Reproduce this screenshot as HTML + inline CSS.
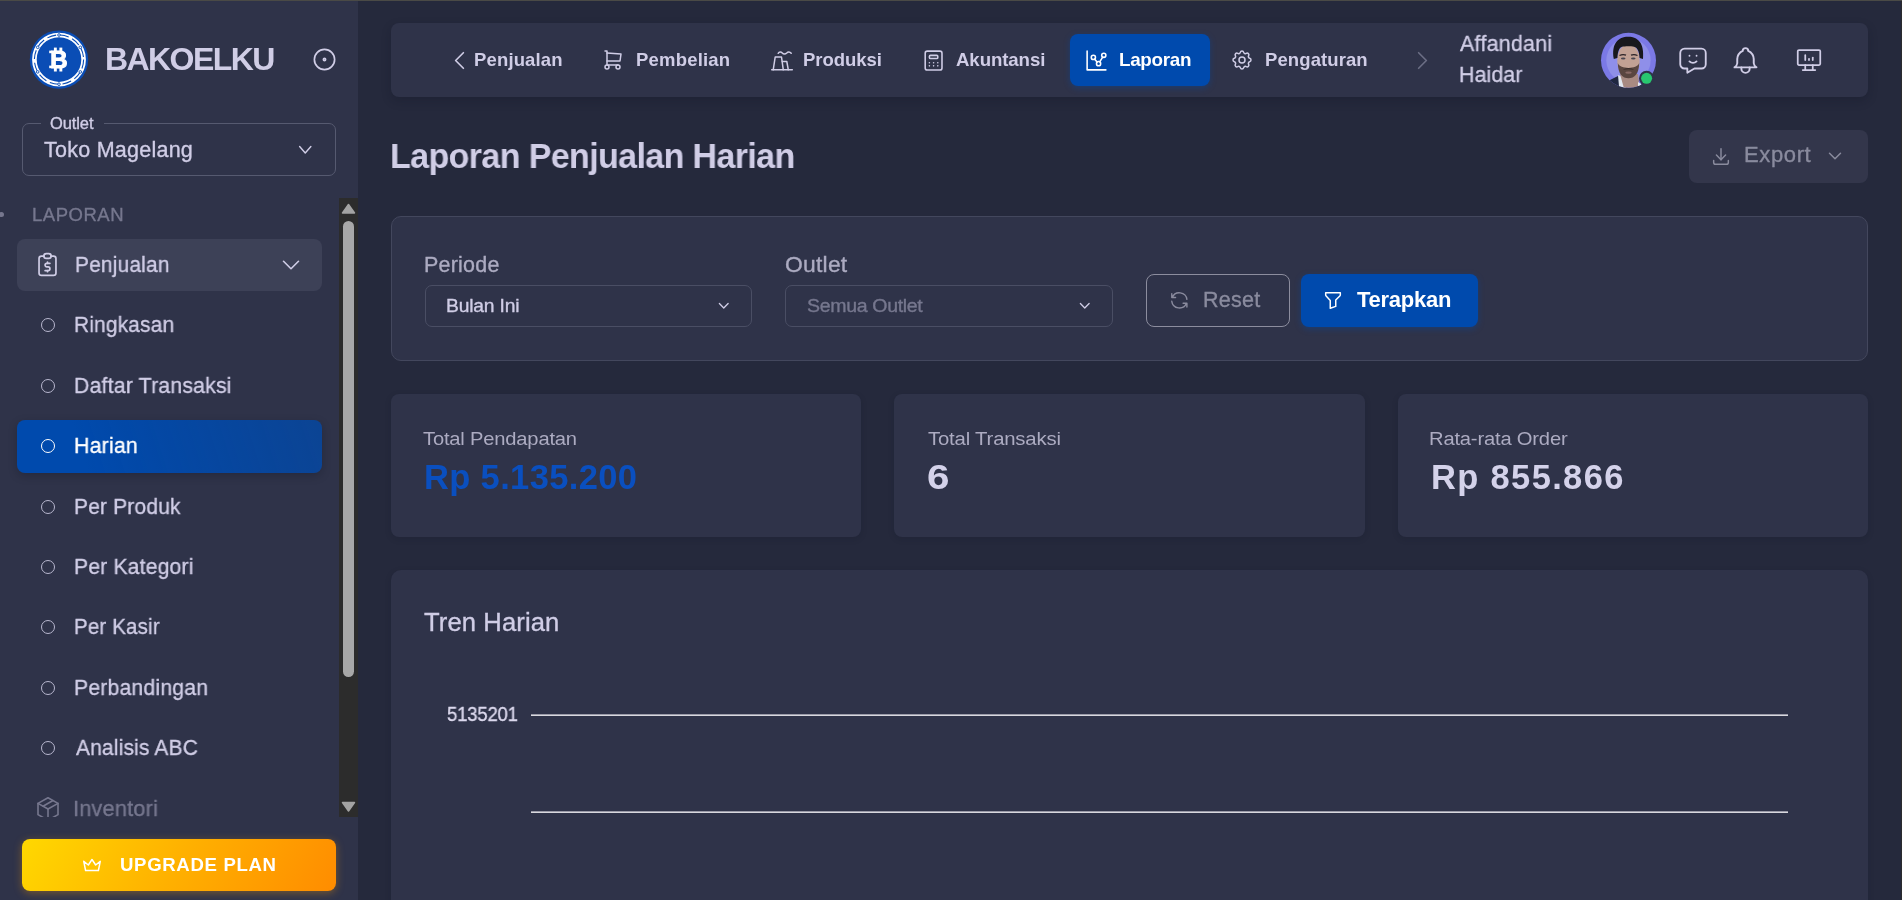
<!DOCTYPE html>
<html><head><meta charset="utf-8"><title>Laporan Penjualan Harian</title>
<style>
html,body{margin:0;padding:0;}
body{width:1902px;height:900px;overflow:hidden;position:relative;background:#25293c;
font-family:"Liberation Sans",sans-serif;-webkit-font-smoothing:antialiased;}
</style></head><body>
<div style="position:absolute;left:0px;top:0px;width:358px;height:900px;background:#2f3349;"></div>
<svg style="position:absolute;left:0;top:0;will-change:transform" width="120" height="120" viewBox="0 0 120 120">
<circle cx="59" cy="59.6" r="29.2" fill="#0a4db5"/>
<circle cx="59" cy="59.6" r="24.6" fill="none" stroke="#fff" stroke-width="4.6"/>
<circle cx="59" cy="59.6" r="24.6" fill="none" stroke="#0a4db5" stroke-width="1.1" stroke-dasharray="9 3.9"/>
<g fill="#fff" stroke="#0a4db5" stroke-width="0.9">
<circle cx="59" cy="35" r="1.3"/><circle cx="59" cy="84.2" r="1.3"/>
<circle cx="37.7" cy="47.3" r="1.3"/><circle cx="80.3" cy="47.3" r="1.3"/>
<circle cx="37.7" cy="71.9" r="1.3"/><circle cx="80.3" cy="71.9" r="1.3"/>
</g>
<text x="50.2" y="68" font-family="Liberation Sans" font-weight="bold" font-size="24" fill="#fff" stroke="#fff" stroke-width="1">B</text>
<rect x="53.9" y="47.6" width="2.9" height="4.5" fill="#fff"/><rect x="59.4" y="47.6" width="2.9" height="4.5" fill="#fff"/>
<rect x="53.9" y="67.2" width="2.9" height="4.3" fill="#fff"/><rect x="59.4" y="67.2" width="2.9" height="4.3" fill="#fff"/>
<rect x="49.2" y="50.6" width="3" height="2.6" fill="#fff"/><rect x="49.2" y="65.6" width="3" height="2.6" fill="#fff"/>
</svg>
<div style="position:absolute;left:105.36px;top:42.81px;font-size:32.00px;line-height:32.00px;font-weight:bold;color:#d0cde6;letter-spacing:-1.57px;white-space:nowrap;will-change:transform;">BAKOELKU</div>
<svg style="position:absolute;left:310.75px;top:46.1px;" width="27" height="27" viewBox="0 0 24 24" fill="none" stroke="#d0cde6" stroke-width="1.5" stroke-linecap="round" stroke-linejoin="round"><path d="M12 12m-9 0a9 9 0 1 0 18 0a9 9 0 1 0 -18 0"/><path d="M12 12m-1 0a1 1 0 1 0 2 0a1 1 0 1 0 -2 0"/></svg>
<div style="position:absolute;left:22px;top:123px;width:314px;height:53px;box-sizing:border-box;border:1px solid #565a70;border-radius:7px;"></div>
<div style="position:absolute;left:41px;top:120px;width:63px;height:7px;background:#2f3349;"></div>
<div style="position:absolute;left:50.00px;top:115.03px;font-size:16.50px;line-height:16.50px;font-weight:normal;color:#d0cde6;letter-spacing:-0.1px;white-space:nowrap;will-change:transform;-webkit-text-stroke:0.35px #d0cde6;">Outlet</div>
<div style="position:absolute;left:43.68px;top:139.90px;font-size:21.50px;line-height:21.50px;font-weight:normal;color:#d0cde6;letter-spacing:0.25px;white-space:nowrap;will-change:transform;-webkit-text-stroke:0.35px #d0cde6;">Toko Magelang</div>
<svg style="position:absolute;left:293.85px;top:138.3px;" width="22.5" height="22.5" viewBox="0 0 24 24" fill="none" stroke="#d0cde6" stroke-width="1.5" stroke-linecap="round" stroke-linejoin="round"><path d="M6 9l6 7l6 -7"/></svg>
<div style="position:absolute;left:-1px;top:212px;width:5px;height:5px;border-radius:50%;background:#76778e"></div>
<div style="position:absolute;left:32.00px;top:205.84px;font-size:18.50px;line-height:18.50px;font-weight:normal;color:#76778e;letter-spacing:0.53px;white-space:nowrap;will-change:transform;-webkit-text-stroke:0.35px #76778e;">LAPORAN</div>
<div style="position:absolute;left:0;top:198px;width:339px;height:619px;overflow:hidden">
<div style="position:absolute;left:17px;top:41px;width:305px;height:52px;background:#3d4157;border-radius:8px;"></div>
<svg style="position:absolute;left:33.35px;top:52.25px;" width="29" height="29" viewBox="0 0 24 24" fill="none" stroke="#d0cde6" stroke-width="1.4" stroke-linecap="round" stroke-linejoin="round"><path d="M9 5h-2a2 2 0 0 0 -2 2v12a2 2 0 0 0 2 2h10a2 2 0 0 0 2 -2v-12a2 2 0 0 0 -2 -2h-2"/><path d="M9 3m0 2a2 2 0 0 1 2 -2h2a2 2 0 0 1 2 2v0a2 2 0 0 1 -2 2h-2a2 2 0 0 1 -2 -2z"/><path d="M14 11h-2.5a1.5 1.5 0 0 0 0 3h1a1.5 1.5 0 0 1 0 3h-2.5"/><path d="M12 17v1m0 -8v1"/></svg>
<div style="position:absolute;left:74.58px;top:56.20px;font-size:22.44px;line-height:22.44px;font-weight:normal;color:#d0cde6;letter-spacing:0.2px;white-space:nowrap;will-change:transform;transform:scaleX(0.9309);transform-origin:0 0;-webkit-text-stroke:0.35px #d0cde6;">Penjualan</div>
<svg style="position:absolute;left:276.2px;top:51.849999999999994px;" width="30" height="30" viewBox="0 0 24 24" fill="none" stroke="#d0cde6" stroke-width="1.3" stroke-linecap="round" stroke-linejoin="round"><path d="M6 9l6 6l6 -6"/></svg>
<div style="position:absolute;left:41px;top:120.4px;width:14px;height:14px;box-sizing:border-box;border:1.5px solid #b9b8cf;border-radius:50%"></div>
<div style="position:absolute;left:74.26px;top:116.44px;font-size:22.44px;line-height:22.44px;font-weight:normal;color:#d0cde6;letter-spacing:0.2px;white-space:nowrap;will-change:transform;transform:scaleX(0.9298);transform-origin:0 0;-webkit-text-stroke:0.35px #d0cde6;">Ringkasan</div>
<div style="position:absolute;left:41px;top:180.8px;width:14px;height:14px;box-sizing:border-box;border:1.5px solid #b9b8cf;border-radius:50%"></div>
<div style="position:absolute;left:74.26px;top:176.68px;font-size:22.44px;line-height:22.44px;font-weight:normal;color:#d0cde6;letter-spacing:0.2px;white-space:nowrap;will-change:transform;transform:scaleX(0.9468);transform-origin:0 0;-webkit-text-stroke:0.35px #d0cde6;">Daftar Transaksi</div>
<div style="position:absolute;left:17px;top:222.2px;width:305px;height:53.0px;background:linear-gradient(72.47deg,#004aad 22%,rgba(0,74,173,0.75) 100%);border-radius:8px;box-shadow:0 3px 8px rgba(10,14,28,0.25);"></div>
<div style="position:absolute;left:41px;top:241.2px;width:14px;height:14px;box-sizing:border-box;border:1.5px solid #ffffff;border-radius:50%"></div>
<div style="position:absolute;left:74.26px;top:236.92px;font-size:22.44px;line-height:22.44px;font-weight:normal;color:#ffffff;letter-spacing:0.2px;white-space:nowrap;will-change:transform;transform:scaleX(0.9502);transform-origin:0 0;-webkit-text-stroke:0.35px #ffffff;">Harian</div>
<div style="position:absolute;left:41px;top:301.6px;width:14px;height:14px;box-sizing:border-box;border:1.5px solid #b9b8cf;border-radius:50%"></div>
<div style="position:absolute;left:74.26px;top:297.96px;font-size:22.44px;line-height:22.44px;font-weight:normal;color:#d0cde6;letter-spacing:0.2px;white-space:nowrap;will-change:transform;transform:scaleX(0.9336);transform-origin:0 0;-webkit-text-stroke:0.35px #d0cde6;">Per Produk</div>
<div style="position:absolute;left:41px;top:362.0px;width:14px;height:14px;box-sizing:border-box;border:1.5px solid #b9b8cf;border-radius:50%"></div>
<div style="position:absolute;left:74.26px;top:358.20px;font-size:22.44px;line-height:22.44px;font-weight:normal;color:#d0cde6;letter-spacing:0.2px;white-space:nowrap;will-change:transform;transform:scaleX(0.9406);transform-origin:0 0;-webkit-text-stroke:0.35px #d0cde6;">Per Kategori</div>
<div style="position:absolute;left:41px;top:422.4px;width:14px;height:14px;box-sizing:border-box;border:1.5px solid #b9b8cf;border-radius:50%"></div>
<div style="position:absolute;left:74.26px;top:418.44px;font-size:22.44px;line-height:22.44px;font-weight:normal;color:#d0cde6;letter-spacing:0.2px;white-space:nowrap;will-change:transform;transform:scaleX(0.9116);transform-origin:0 0;-webkit-text-stroke:0.35px #d0cde6;">Per Kasir</div>
<div style="position:absolute;left:41px;top:482.8px;width:14px;height:14px;box-sizing:border-box;border:1.5px solid #b9b8cf;border-radius:50%"></div>
<div style="position:absolute;left:74.26px;top:478.68px;font-size:22.44px;line-height:22.44px;font-weight:normal;color:#d0cde6;letter-spacing:0.2px;white-space:nowrap;will-change:transform;transform:scaleX(0.9443);transform-origin:0 0;-webkit-text-stroke:0.35px #d0cde6;">Perbandingan</div>
<div style="position:absolute;left:41px;top:543.2px;width:14px;height:14px;box-sizing:border-box;border:1.5px solid #b9b8cf;border-radius:50%"></div>
<div style="position:absolute;left:75.86px;top:538.92px;font-size:22.44px;line-height:22.44px;font-weight:normal;color:#d0cde6;letter-spacing:0.2px;white-space:nowrap;will-change:transform;transform:scaleX(0.9326);transform-origin:0 0;-webkit-text-stroke:0.35px #d0cde6;">Analisis ABC</div>
<svg style="position:absolute;left:33px;top:596px;" width="30" height="30" viewBox="0 0 24 24" fill="none" stroke="#76778e" stroke-width="1.3" stroke-linecap="round" stroke-linejoin="round"><path d="M12 3l8 4.5l0 9l-8 4.5l-8 -4.5l0 -9l8 -4.5"/><path d="M12 12l8 -4.5"/><path d="M12 12l0 9"/><path d="M12 12l-8 -4.5"/><path d="M16 5.25l-8 4.5"/></svg>
<div style="position:absolute;left:73.46px;top:599.96px;font-size:22.44px;line-height:22.44px;font-weight:normal;color:#76778e;letter-spacing:0.2px;white-space:nowrap;will-change:transform;transform:scaleX(0.9678);transform-origin:0 0;-webkit-text-stroke:0.35px #76778e;">Inventori</div>
</div>
<div style="position:absolute;left:339px;top:198px;width:19px;height:619px;background:#2c2c2c;"></div>
<svg style="position:absolute;left:339px;top:198px" width="19" height="619"><path d="M9.5 6.5 L15.5 15 L3.5 15 Z" fill="#a3a3a3" stroke="#a3a3a3" stroke-width="1.5" stroke-linejoin="round"/><path d="M9.5 613 L15.5 604.5 L3.5 604.5 Z" fill="#a3a3a3" stroke="#a3a3a3" stroke-width="1.5" stroke-linejoin="round"/></svg>
<div style="position:absolute;left:343px;top:221px;width:11px;height:456px;background:#a8a8a8;border-radius:6px;"></div>
<div style="position:absolute;left:22px;top:839px;width:314px;height:52px;background:linear-gradient(120deg,#ffd800 0%,#ffb000 50%,#ff8c00 100%);border-radius:8px;box-shadow:0 2px 8px rgba(255,159,0,0.35);"></div>
<svg style="position:absolute;left:81px;top:853.6px;" width="22" height="22" viewBox="0 0 24 24" fill="none" stroke="#ffffff" stroke-width="1.6" stroke-linecap="round" stroke-linejoin="round"><path d="M12 6l4 6l5 -4l-2 10h-14l-2 -10l5 4z"/></svg>
<div style="position:absolute;left:119.78px;top:856.12px;font-size:18.50px;line-height:18.50px;font-weight:bold;color:#ffffff;letter-spacing:0.66px;white-space:nowrap;will-change:transform;transform:scaleX(1.0047);transform-origin:0 0;">UPGRADE PLAN</div>
<div style="position:absolute;left:391px;top:23px;width:1477px;height:74px;background:#2f3349;border-radius:8px;box-shadow:0 4px 10px rgba(15,20,34,0.25);"></div>
<svg style="position:absolute;left:443.8px;top:45px;" width="31" height="31" viewBox="0 0 24 24" fill="none" stroke="#d0cde6" stroke-width="1.3" stroke-linecap="round" stroke-linejoin="round"><path d="M15 6l-6 6l6 6"/></svg>
<div style="position:absolute;left:473.64px;top:50.64px;font-size:18.50px;line-height:18.50px;font-weight:bold;color:#d0cde6;letter-spacing:0.15px;white-space:nowrap;will-change:transform;">Penjualan</div>
<svg style="position:absolute;left:601px;top:48px;" width="24" height="24" viewBox="0 0 24 24" fill="none" stroke="#d0cde6" stroke-width="1.5" stroke-linecap="round" stroke-linejoin="round"><path d="M6 19m-2 0a2 2 0 1 0 4 0a2 2 0 1 0 -4 0"/><path d="M17 19m-2 0a2 2 0 1 0 4 0a2 2 0 1 0 -4 0"/><path d="M17 17h-11v-14h-2"/><path d="M6 5l14 1l-1 7h-13"/></svg>
<div style="position:absolute;left:635.64px;top:50.64px;font-size:18.50px;line-height:18.50px;font-weight:bold;color:#d0cde6;letter-spacing:0.2px;white-space:nowrap;will-change:transform;">Pembelian</div>
<svg style="position:absolute;left:766px;top:46px;" width="32" height="30" viewBox="0 0 32 30" fill="none" stroke="#d0cde6" stroke-width="1.5" stroke-linecap="round" stroke-linejoin="round"><path d="M5.7 23.8H26.3"/><path d="M7.2 23.8L9.2 11H15.5L17.3 23.8"/><path d="M16.3 15.5H20.8L22.3 23.8"/><path d="M12.2 7.3C13.2 5.6 15 5.6 16.3 7C17.5 8.3 19.4 8.3 20.7 7C22 5.6 23.8 5.6 25.2 7.3"/></svg>
<div style="position:absolute;left:803.08px;top:50.64px;font-size:18.50px;line-height:18.50px;font-weight:bold;color:#d0cde6;letter-spacing:-0.05px;white-space:nowrap;will-change:transform;">Produksi</div>
<svg style="position:absolute;left:921px;top:48px;" width="25.2" height="25.2" viewBox="0 0 24 24" fill="none" stroke="#d0cde6" stroke-width="1.5" stroke-linecap="round" stroke-linejoin="round"><path d="M4 3m0 2a2 2 0 0 1 2 -2h12a2 2 0 0 1 2 2v14a2 2 0 0 1 -2 2h-12a2 2 0 0 1 -2 -2z"/><path d="M8 7m0 1a1 1 0 0 1 1 -1h6a1 1 0 0 1 1 1v1a1 1 0 0 1 -1 1h-6a1 1 0 0 1 -1 -1z"/><path d="M8 14l0 .01"/><path d="M12 14l0 .01"/><path d="M16 14l0 .01"/><path d="M8 17l0 .01"/><path d="M12 17l0 .01"/><path d="M16 17l0 .01"/></svg>
<div style="position:absolute;left:955.56px;top:50.64px;font-size:18.50px;line-height:18.50px;font-weight:bold;color:#d0cde6;letter-spacing:-0.1px;white-space:nowrap;will-change:transform;transform:scaleX(1.0083);transform-origin:0 0;">Akuntansi</div>
<div style="position:absolute;left:1070px;top:34px;width:140px;height:52px;background:#004aad;border-radius:8px;box-shadow:0 2px 6px rgba(0,74,173,0.4);"></div>
<svg style="position:absolute;left:1083.65px;top:47.9px;" width="25" height="25" viewBox="0 0 24 24" fill="none" stroke="#ffffff" stroke-width="1.5" stroke-linecap="round" stroke-linejoin="round"><path d="M3 3v18h18"/><path d="M9 9m-2 0a2 2 0 1 0 4 0a2 2 0 1 0 -4 0"/><path d="M19 7m-2 0a2 2 0 1 0 4 0a2 2 0 1 0 -4 0"/><path d="M14 15m-2 0a2 2 0 1 0 4 0a2 2 0 1 0 -4 0"/><path d="M10.16 10.62l2.34 2.88"/><path d="M15.088 13.328l2.837 -4.586"/></svg>
<div style="position:absolute;left:1118.72px;top:50.64px;font-size:18.50px;line-height:18.50px;font-weight:bold;color:#ffffff;letter-spacing:-0.3px;white-space:nowrap;will-change:transform;transform:scaleX(1.0170);transform-origin:0 0;">Laporan</div>
<svg style="position:absolute;left:1229.9px;top:47.8px;" width="24" height="24" viewBox="0 0 24 24" fill="none" stroke="#d0cde6" stroke-width="1.5" stroke-linecap="round" stroke-linejoin="round"><path d="M10.325 4.317c.426 -1.756 2.924 -1.756 3.35 0a1.724 1.724 0 0 0 2.573 1.066c1.543 -.94 3.31 .826 2.37 2.37a1.724 1.724 0 0 0 1.065 2.572c1.756 .426 1.756 2.924 0 3.35a1.724 1.724 0 0 0 -1.066 2.573c.94 1.543 -.826 3.31 -2.37 2.37a1.724 1.724 0 0 0 -2.572 1.065c-.426 1.756 -2.924 1.756 -3.35 0a1.724 1.724 0 0 0 -2.573 -1.066c-1.543 .94 -3.31 -.826 -2.37 -2.37a1.724 1.724 0 0 0 -1.065 -2.572c-1.756 -.426 -1.756 -2.924 0 -3.35a1.724 1.724 0 0 0 1.066 -2.573c-.94 -1.543 .826 -3.31 2.37 -2.37c1 .608 2.296 .07 2.572 -1.065z"/><path d="M9 12a3 3 0 1 0 6 0a3 3 0 0 0 -6 0"/></svg>
<div style="position:absolute;left:1264.54px;top:50.64px;font-size:18.50px;line-height:18.50px;font-weight:bold;color:#d0cde6;letter-spacing:0.1px;white-space:nowrap;will-change:transform;">Pengaturan</div>
<svg style="position:absolute;left:1407.05px;top:45px;" width="31" height="31" viewBox="0 0 24 24" fill="none" stroke="#6b6e84" stroke-width="1.3" stroke-linecap="round" stroke-linejoin="round"><path d="M9 6l6 6l-6 6"/></svg>
<div style="position:absolute;left:1460.00px;top:32.81px;font-size:22.20px;line-height:22.20px;font-weight:normal;color:#d0cde6;letter-spacing:0.3px;white-space:nowrap;will-change:transform;transform:scaleX(0.9617);transform-origin:0 0;-webkit-text-stroke:0.35px #d0cde6;">Affandani</div>
<div style="position:absolute;left:1459.20px;top:64.00px;font-size:22.56px;line-height:22.56px;font-weight:normal;color:#d0cde6;letter-spacing:0.1px;white-space:nowrap;will-change:transform;transform:scaleX(0.9466);transform-origin:0 0;-webkit-text-stroke:0.35px #d0cde6;">Haidar</div>
<svg style="position:absolute;left:1598px;top:30px" width="62" height="62" viewBox="0 0 62 62">
<defs><clipPath id="avc"><circle cx="30.5" cy="30.3" r="27.5"/></clipPath></defs>
<circle cx="30.5" cy="30.3" r="27.5" fill="#7b79e6"/>
<g clip-path="url(#avc)">
<circle cx="30.5" cy="30.3" r="22.2" fill="#8f8fe9"/>
<path d="M8 62 L12 50 L21 45.5 L24 62 Z" fill="#1f2740"/>
<path d="M20 45 L27 48 L28 62 L21.5 62 Z" fill="#e2e8f0"/>
<path d="M22 44 L40 44 L42 62 L27 62 Z" fill="#a88a82"/>
<path d="M40 52 L43 54 L43 60 L40 58 Z" fill="#e2e8f0"/>
<ellipse cx="30.5" cy="30.5" rx="11.2" ry="16.5" fill="#c2a194"/>
<path d="M19.8 33 C20 44 24.5 48.3 30.5 48.3 C36.5 48.3 41 44 41.2 33 C39 39.5 22 39.5 19.8 33 Z" fill="#5a4640"/>
<path d="M24.5 40 Q30.5 36 36.5 40 Q30.5 38.6 24.5 40 Z" fill="#3a2d2a"/>
<ellipse cx="30.5" cy="42.6" rx="3.2" ry="1.2" fill="#8a6a66"/>
<path d="M15.8 29 C13 13 21 6.5 30.5 6.8 C40 7 46.5 13 45 29 L41.6 28 C41.2 21 39.2 17.5 36 16.8 C33 16 27 16 24 16.8 C21.5 17.6 19.8 21 19.4 28 Z" fill="#18181d"/>
<ellipse cx="25.2" cy="28.5" rx="2.3" ry="1.1" fill="#4a4650"/>
<ellipse cx="35.3" cy="28.5" rx="2.3" ry="1.1" fill="#4a4650"/>
<path d="M21.5 25.5 Q25 23.8 28 25.2 M33 25.2 Q36 23.8 39.5 25.5" stroke="#2a2226" stroke-width="1.3" fill="none"/>
</g>
<circle cx="48.6" cy="48.3" r="7.6" fill="#2f3349"/>
<circle cx="48.6" cy="48.3" r="5.5" fill="#28c76f"/>
</svg>
<svg style="position:absolute;left:1676px;top:43.4px;" width="34" height="34" viewBox="0 0 24 24" fill="none" stroke="#d0cde6" stroke-width="1.3" stroke-linecap="round" stroke-linejoin="round"><path d="M18 4a3 3 0 0 1 3 3v8a3 3 0 0 1 -3 3h-5l-5 3v-3h-2a3 3 0 0 1 -3 -3v-8a3 3 0 0 1 3 -3h12z"/><path d="M9.5 9h.01"/><path d="M14.5 9h.01"/><path d="M9.5 13a3.5 3.5 0 0 0 5 0"/></svg>
<svg style="position:absolute;left:1728.95px;top:43.8px;" width="33" height="33" viewBox="0 0 24 24" fill="none" stroke="#d0cde6" stroke-width="1.4" stroke-linecap="round" stroke-linejoin="round"><path d="M10 5a2 2 0 1 1 4 0a7 7 0 0 1 4 6v3a4 4 0 0 0 2 3h-16a4 4 0 0 0 2 -3v-3a7 7 0 0 1 4 -6"/><path d="M9 17v1a3 3 0 0 0 6 0v-1"/></svg>
<svg style="position:absolute;left:1793.7px;top:45px;" width="30" height="30" viewBox="0 0 24 24" fill="none" stroke="#d0cde6" stroke-width="1.4" stroke-linecap="round" stroke-linejoin="round"><path d="M3 4m0 1a1 1 0 0 1 1 -1h16a1 1 0 0 1 1 1v10a1 1 0 0 1 -1 1h-16a1 1 0 0 1 -1 -1z"/><path d="M7 20h10"/><path d="M9 16v4"/><path d="M15 16v4"/><path d="M9 12v-4"/><path d="M12 12v-1"/><path d="M15 12v-2"/></svg>
<div style="position:absolute;left:390.14px;top:138.02px;font-size:35.18px;line-height:35.18px;font-weight:bold;color:#d0cde6;letter-spacing:-0.67px;white-space:nowrap;will-change:transform;transform:scaleX(0.9685);transform-origin:0 0;">Laporan Penjualan Harian</div>
<div style="position:absolute;left:1689px;top:130px;width:179px;height:53px;background:#33364b;border-radius:8px;"></div>
<svg style="position:absolute;left:1710px;top:145px;" width="22" height="22" viewBox="0 0 24 24" fill="none" stroke="#8a8b9e" stroke-width="1.6" stroke-linecap="round" stroke-linejoin="round"><path d="M4 17v2a2 2 0 0 0 2 2h12a2 2 0 0 0 2 -2v-2"/><path d="M7 11l5 5l5 -5"/><path d="M12 4l0 12"/></svg>
<div style="position:absolute;left:1744.44px;top:145.44px;font-size:21.50px;line-height:21.50px;font-weight:normal;color:#8a8b9e;letter-spacing:0.62px;white-space:nowrap;will-change:transform;transform:scaleX(1.0225);transform-origin:0 0;-webkit-text-stroke:0.35px #8a8b9e;">Export</div>
<svg style="position:absolute;left:1823.95px;top:144.75px;" width="22" height="22" viewBox="0 0 24 24" fill="none" stroke="#8a8b9e" stroke-width="1.6" stroke-linecap="round" stroke-linejoin="round"><path d="M6 9l6 6l6 -6"/></svg>
<div style="position:absolute;left:391px;top:216px;width:1477px;height:145px;background:#2f3349;box-sizing:border-box;border:1px solid #43475d;border-radius:10px;"></div>
<div style="position:absolute;left:424.44px;top:254.77px;font-size:21.30px;line-height:21.30px;font-weight:normal;color:#acabc1;letter-spacing:0.23px;white-space:nowrap;will-change:transform;transform:scaleX(1.0074);transform-origin:0 0;-webkit-text-stroke:0.35px #acabc1;">Periode</div>
<div style="position:absolute;left:425px;top:285px;width:327px;height:42px;box-sizing:border-box;border:1px solid #4a4e64;border-radius:7px;"></div>
<div style="position:absolute;left:446.28px;top:296.55px;font-size:18.61px;line-height:18.61px;font-weight:normal;color:#d0cde6;letter-spacing:-0.17px;white-space:nowrap;will-change:transform;transform:scaleX(1.0340);transform-origin:0 0;-webkit-text-stroke:0.35px #d0cde6;">Bulan Ini</div>
<svg style="position:absolute;left:714.75px;top:297.25px;" width="17.5" height="17.5" viewBox="0 0 24 24" fill="none" stroke="#d0cde6" stroke-width="1.8" stroke-linecap="round" stroke-linejoin="round"><path d="M6 9l6 6l6 -6"/></svg>
<div style="position:absolute;left:784.84px;top:254.77px;font-size:21.30px;line-height:21.30px;font-weight:normal;color:#acabc1;letter-spacing:0.23px;white-space:nowrap;will-change:transform;transform:scaleX(1.0726);transform-origin:0 0;-webkit-text-stroke:0.35px #acabc1;">Outlet</div>
<div style="position:absolute;left:785px;top:285px;width:328px;height:42px;box-sizing:border-box;border:1px solid #4a4e64;border-radius:7px;"></div>
<div style="position:absolute;left:806.80px;top:296.55px;font-size:18.61px;line-height:18.61px;font-weight:normal;color:#76778e;letter-spacing:-0.32px;white-space:nowrap;will-change:transform;transform:scaleX(1.0495);transform-origin:0 0;-webkit-text-stroke:0.35px #76778e;">Semua Outlet</div>
<svg style="position:absolute;left:1076.15px;top:297.25px;" width="17.5" height="17.5" viewBox="0 0 24 24" fill="none" stroke="#d0cde6" stroke-width="1.8" stroke-linecap="round" stroke-linejoin="round"><path d="M6 9l6 6l6 -6"/></svg>
<div style="position:absolute;left:1146px;top:274px;width:144px;height:53px;box-sizing:border-box;border:1px solid #8c8d9e;border-radius:8px;"></div>
<svg style="position:absolute;left:1167.85px;top:288.8px;" width="22.7" height="22.7" viewBox="0 0 24 24" fill="none" stroke="#8a8b9e" stroke-width="1.5" stroke-linecap="round" stroke-linejoin="round"><path d="M20 11a8.1 8.1 0 0 0 -15.5 -2m-.5 -4v4h4"/><path d="M4 13a8.1 8.1 0 0 0 15.5 2m.5 4v-4h-4"/></svg>
<div style="position:absolute;left:1202.60px;top:289.90px;font-size:21.50px;line-height:21.50px;font-weight:normal;color:#8a8b9e;letter-spacing:0.27px;white-space:nowrap;will-change:transform;-webkit-text-stroke:0.35px #8a8b9e;">Reset</div>
<div style="position:absolute;left:1301px;top:274px;width:177px;height:53px;background:#004aad;border-radius:8px;box-shadow:0 2px 6px rgba(0,74,173,0.4);"></div>
<svg style="position:absolute;left:1321.65px;top:289.15px;" width="22" height="22" viewBox="0 0 24 24" fill="none" stroke="#ffffff" stroke-width="1.6" stroke-linecap="round" stroke-linejoin="round"><path d="M4 4h16v2.172a2 2 0 0 1 -.586 1.414l-4.414 4.414v7l-6 2v-8.5l-4.48 -4.928a2 2 0 0 1 -.52 -1.345v-2.227z"/></svg>
<div style="position:absolute;left:1357.08px;top:289.90px;font-size:21.50px;line-height:21.50px;font-weight:bold;color:#ffffff;letter-spacing:-0.26px;white-space:nowrap;will-change:transform;transform:scaleX(1.0238);transform-origin:0 0;">Terapkan</div>
<div style="position:absolute;left:391px;top:394px;width:470px;height:143px;background:#2f3349;border-radius:8px;box-shadow:0 2px 6px rgba(15,20,34,0.15);"></div>
<div style="position:absolute;left:423.36px;top:428.94px;font-size:19.09px;line-height:19.09px;font-weight:normal;color:#acabc1;letter-spacing:-0.18px;white-space:nowrap;will-change:transform;transform:scaleX(1.0565);transform-origin:0 0;">Total Pendapatan</div>
<div style="position:absolute;left:423.52px;top:459.96px;font-size:34.50px;line-height:34.50px;font-weight:bold;color:#0a4fbf;letter-spacing:0.35px;white-space:nowrap;will-change:transform;">Rp 5.135.200</div>
<div style="position:absolute;left:894px;top:394px;width:471px;height:143px;background:#2f3349;border-radius:8px;box-shadow:0 2px 6px rgba(15,20,34,0.15);"></div>
<div style="position:absolute;left:927.96px;top:428.94px;font-size:19.09px;line-height:19.09px;font-weight:normal;color:#acabc1;letter-spacing:-0.18px;white-space:nowrap;will-change:transform;transform:scaleX(1.0657);transform-origin:0 0;">Total Transaksi</div>
<div style="position:absolute;left:926.88px;top:459.96px;font-size:34.50px;line-height:34.50px;font-weight:bold;color:#d4d2ea;letter-spacing:1.34px;white-space:nowrap;will-change:transform;transform:scaleX(1.1700);transform-origin:0 0;">6</div>
<div style="position:absolute;left:1398px;top:394px;width:470px;height:143px;background:#2f3349;border-radius:8px;box-shadow:0 2px 6px rgba(15,20,34,0.15);"></div>
<div style="position:absolute;left:1429.40px;top:428.94px;font-size:19.09px;line-height:19.09px;font-weight:normal;color:#acabc1;letter-spacing:-0.18px;white-space:nowrap;will-change:transform;transform:scaleX(1.0579);transform-origin:0 0;">Rata-rata Order</div>
<div style="position:absolute;left:1430.56px;top:459.96px;font-size:34.50px;line-height:34.50px;font-weight:bold;color:#d4d2ea;letter-spacing:1.34px;white-space:nowrap;will-change:transform;">Rp 855.866</div>
<div style="position:absolute;left:391px;top:570px;width:1477px;height:340px;background:#2f3349;border-radius:10px;box-shadow:0 2px 6px rgba(15,20,34,0.15);"></div>
<div style="position:absolute;left:423.88px;top:610.13px;font-size:25.60px;line-height:25.60px;font-weight:normal;color:#d0cde6;letter-spacing:0.11px;white-space:nowrap;will-change:transform;-webkit-text-stroke:0.35px #d0cde6;">Tren Harian</div>
<div style="position:absolute;left:447.20px;top:705.47px;font-size:19.55px;line-height:19.55px;font-weight:normal;color:#dcd9ee;letter-spacing:-0.2px;white-space:nowrap;will-change:transform;transform:scaleX(0.9480);transform-origin:0 0;-webkit-text-stroke:0.35px #dcd9ee;">5135201</div>
<div style="position:absolute;left:531px;top:714px;width:1257px;height:2px;background:linear-gradient(#9a9aa8 0,#9a9aa8 40%,#d8d8de 40%);"></div>
<div style="position:absolute;left:531px;top:811px;width:1257px;height:2px;background:linear-gradient(#9a9aa8 0,#9a9aa8 40%,#d8d8de 40%);"></div>
<div style="position:absolute;left:0px;top:0px;width:1902px;height:1px;background:#4a4a46;"></div>
<div style="position:absolute;left:1901px;top:1px;width:1px;height:899px;background:#2b2b2e;"></div>
</body></html>
